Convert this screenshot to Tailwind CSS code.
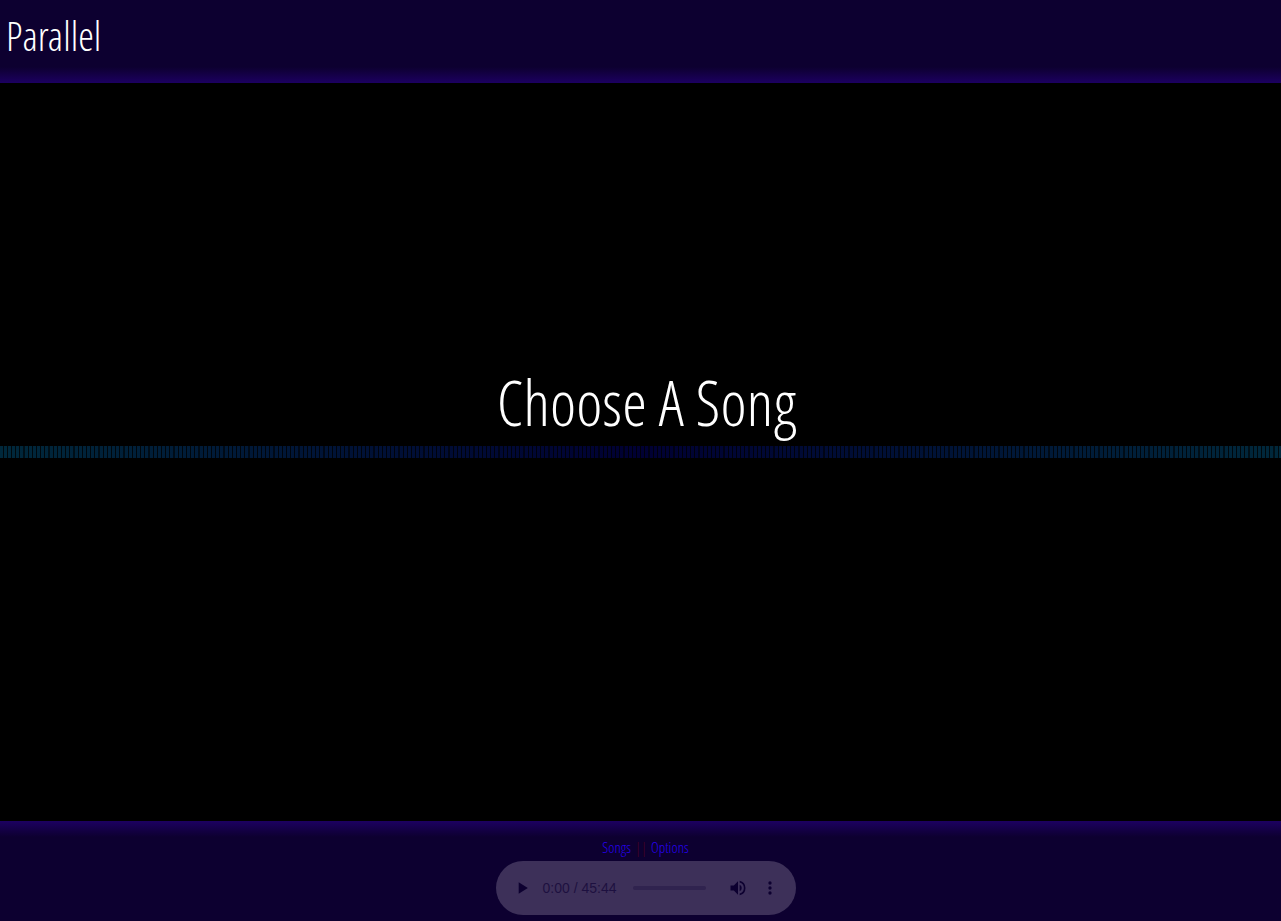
<!DOCTYPE html>
<html lang="en">
<head>
<meta charset="utf-8">
<meta name="viewport" content="width=device-width, initial-scale=1">
<title>Parallel</title>
<script src="https://cdn.jsdelivr.net/npm/@tailwindcss/browser@4"></script>
</head>
<body class="flex min-h-screen flex-col bg-black font-['Open_Sans_Condensed_Light','Open_Sans_Condensed','Open_Sans',sans-serif] font-light text-white">
<header class="bg-linear-to-t from-[#1c0061] to-[#0d0030] to-[16px] px-1.5 pt-2 pb-5">
  <h1 class="text-[40px] leading-[55px] font-light">Parallel</h1>
</header>
<main class="flex flex-1 flex-col items-center justify-center pb-[88px]">
  <h2 class="pl-3 text-[63px] leading-[88px] font-light">Choose A Song</h2>
  <div class="h-3 w-full bg-[repeating-linear-gradient(90deg,transparent_0px_3px,#000c_3px_4px,transparent_4px_7px,#000c_7px_8px,transparent_8px_11px,#000c_11px_12px,transparent_12px_15px,#000c_15px_16px,transparent_16px_19px,#000c_19px_20px,transparent_20px_23px,#0009_23px_25px),linear-gradient(90deg,#00283b,#000033,#00283b)]"></div>
</main>
<footer class="flex flex-col items-center bg-linear-to-b from-[#1c0061] to-[#0d0030] to-[16px] pt-3.5 pb-1.5 pl-2.5">
  <nav class="mb-0.5 flex gap-1 text-[15px] leading-6 text-[#4b0020]"><a class="text-[#2600ee]" href="#songs">Songs</a><span>||</span><a class="text-[#2600ee]" href="#options">Options</a></nav>
  <div class="flex h-[54px] w-[300px] items-center rounded-full bg-[#3d3059] pl-4 font-['Liberation_Sans',sans-serif] text-sm font-normal text-[#0d0030]">
    <button aria-label="Play" class="mr-[11px]"><svg class="size-5" viewBox="0 0 24 24" fill="currentColor"><path d="M8 5v14l11-7z"/></svg></button>
    <span class="w-[90px] text-[#1d1040]">0:00 / 45:44</span>
    <input aria-label="Position" type="range" value="0" class="h-1 w-[73px] appearance-none rounded-full bg-[#30234f] [&::-webkit-slider-thumb]:appearance-none">
    <button aria-label="Mute" class="ml-[22px]"><svg class="size-5" viewBox="0 0 24 24" fill="currentColor"><path d="M3 9v6h4l5 5V4L7 9H3zm13.5 3A4.5 4.5 0 0 0 14 7.97v8.05A4.5 4.5 0 0 0 16.5 12zM14 3.23v2.06a7 7 0 0 1 0 13.42v2.06a9 9 0 0 0 0-17.54z"/></svg></button>
    <button aria-label="More options" class="ml-3"><svg class="size-5" viewBox="0 0 24 24" fill="currentColor"><path d="M12 8a2 2 0 1 0 0-4 2 2 0 0 0 0 4zm0 2a2 2 0 1 0 0 4 2 2 0 0 0 0-4zm0 6a2 2 0 1 0 0 4 2 2 0 0 0 0-4z"/></svg></button>
  </div>
</footer>
</body>
</html>
